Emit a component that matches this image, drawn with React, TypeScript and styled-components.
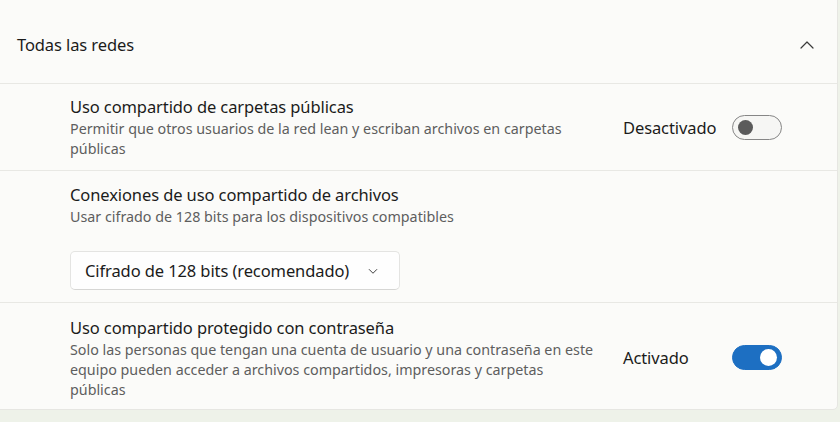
import styled, { createGlobalStyle } from "styled-components";

const GlobalStyle = createGlobalStyle`
  html, body {
    margin: 0;
    padding: 0;
    background: #eef2e9;
  }
  body {
    font-family: "Noto Sans", "Open Sans", sans-serif;
    color: #1b1b1b;
    width: 840px;
    height: 422px;
    overflow: hidden;
  }
`;

const Page = styled.div`
  padding: 0 2px 0 0;
`;

const Expander = styled.section`
  margin: -6px 0 0 -6px;
  background: #fbfbf9;
  border: 1px solid #e6e6e2;
  border-radius: 0 0 5px 5px;
  overflow: hidden;
`;

const Header = styled.div`
  height: 89px;
  padding: 11px 22px 0 22px;
  box-sizing: border-box;
  display: flex;
  align-items: center;
  justify-content: space-between;
  border-bottom: 1px solid #e8e8e4;
`;

const HeaderTitle = styled.span`
  font-size: 16.5px;
  letter-spacing: -0.1px;
`;

const Row = styled.div<{ $height: number; $last?: boolean }>`
  height: ${(p) => p.$height}px;
  box-sizing: border-box;
  padding: ${(p) => (p.$last ? "3px" : "0")} 55px 0 75px;
  display: flex;
  align-items: center;
  justify-content: space-between;
  border-bottom: ${(p) => (p.$last ? "none" : "1px solid #e8e8e4")};
`;

const Stack = styled.div`
  display: flex;
  flex-direction: column;
  padding: 12px 75px 0;
  box-sizing: border-box;
  height: 132px;
  border-bottom: 1px solid #e8e8e4;
`;

const Texts = styled.div`
  max-width: 540px;
  display: flex;
  flex-direction: column;
`;

const Title = styled.div`
  font-size: 16.5px;
  line-height: 24px;
  letter-spacing: -0.1px;
`;

const Description = styled.div`
  font-size: 14.3px;
  line-height: 20px;
  color: #5e5e5e;
`;

const Control = styled.div`
  display: flex;
  align-items: center;
`;

const StateLabel = styled.span`
  font-size: 16.5px;
  width: 109px;
  letter-spacing: -0.1px;
`;

const Track = styled.div<{ $on: boolean }>`
  width: 50px;
  height: 25px;
  box-sizing: border-box;
  border-radius: 13px;
  display: flex;
  align-items: center;
  padding: 0 4px;
  justify-content: ${(p) => (p.$on ? "flex-end" : "flex-start")};
  background: ${(p) => (p.$on ? "#1d6fc2" : "#f6f6f4")};
  border: 1px solid ${(p) => (p.$on ? "#1d6fc2" : "#868686")};
`;

const Knob = styled.div<{ $on: boolean }>`
  width: ${(p) => (p.$on ? 17 : 15)}px;
  height: ${(p) => (p.$on ? 17 : 15)}px;
  border-radius: 50%;
  background: ${(p) => (p.$on ? "#ffffff" : "#5b5b5b")};
  margin: 0 ${(p) => (p.$on ? 0 : 1)}px;
`;

const Select = styled.div`
  margin-top: 24px;
  width: 330px;
  height: 39px;
  box-sizing: border-box;
  padding: 0 20px 0 14px;
  display: flex;
  align-items: center;
  justify-content: space-between;
  background: #fefefe;
  border: 1px solid #e4e4e2;
  border-bottom-color: #d6d6d4;
  border-radius: 5px;
  font-size: 16.5px;
  letter-spacing: -0.1px;
`;

function Chevron({ up, size }: { up?: boolean; size: number }) {
  return (
    <svg width={size} height={size} viewBox="0 0 16 16" fill="none">
      <path
        d={up ? "M2 11 L8 5 L14 11" : "M3 6 L8 11 L13 6"}
        stroke="#3a3a3a"
        strokeWidth={up ? 1.2 : 1.3}
        strokeLinecap="round"
        strokeLinejoin="round"
      />
    </svg>
  );
}

function Toggle({ on, label }: { on: boolean; label: string }) {
  return (
    <Control>
      <StateLabel>{label}</StateLabel>
      <Track $on={on}>
        <Knob $on={on} />
      </Track>
    </Control>
  );
}

export default function App() {
  return (
    <>
      <GlobalStyle />
      <Page>
        <Expander>
          <Header>
            <HeaderTitle>Todas las redes</HeaderTitle>
            <Chevron up size={16} />
          </Header>
          <Row $height={87}>
            <Texts>
              <Title>Uso compartido de carpetas públicas</Title>
              <Description>
                Permitir que otros usuarios de la red lean y escriban archivos
                en carpetas
                <br />
                públicas
              </Description>
            </Texts>
            <Toggle on={false} label="Desactivado" />
          </Row>
          <Stack>
            <Title>Conexiones de uso compartido de archivos</Title>
            <Description>
              Usar cifrado de 128 bits para los dispositivos compatibles
            </Description>
            <Select>
              <span>Cifrado de 128 bits (recomendado)</span>
              <Chevron size={12} />
            </Select>
          </Stack>
          <Row $height={106} $last>
            <Texts>
              <Title>Uso compartido protegido con contraseña</Title>
              <Description>
                Solo las personas que tengan una cuenta de usuario y una
                contraseña en este
                <br />
                equipo pueden acceder a archivos compartidos, impresoras y
                carpetas
                <br />
                públicas
              </Description>
            </Texts>
            <Toggle on label="Activado" />
          </Row>
        </Expander>
      </Page>
    </>
  );
}
